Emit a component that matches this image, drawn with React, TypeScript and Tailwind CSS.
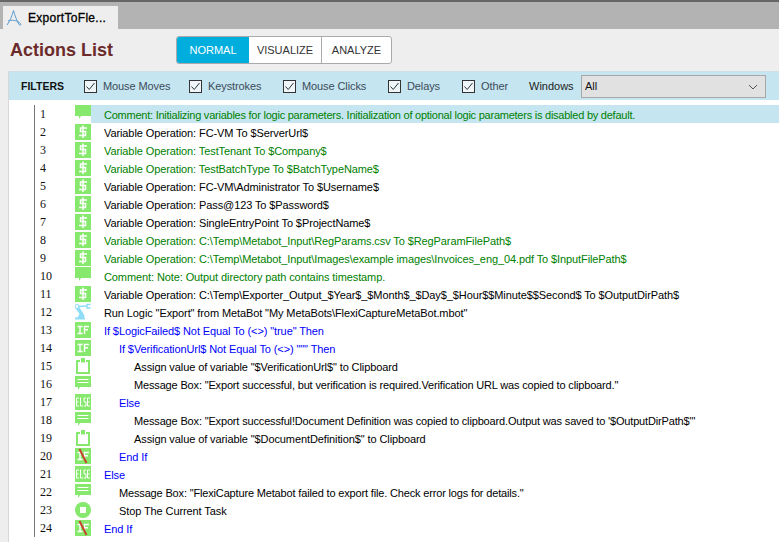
import React from "react";

const G = "#86e86c";

function Comment() {
  return (
    <svg width="16" height="18" viewBox="0 0 16 18" className="block">
      <path d="M0 0H16V11H6L4 14V11H0Z" fill={G} />
    </svg>
  );
}
function Dollar() {
  return (
    <svg width="16" height="18" viewBox="0 0 16 18" className="block">
      <rect width="16" height="16" y="1" fill={G} />
      <path d="M12 5H5.500V8.500H10.500V12.500H4M8 2.500V15" fill="none" stroke="#fff" strokeWidth="1.500" />
    </svg>
  );
}
function Robot() {
  return (
    <svg width="16" height="18" viewBox="0 0 16 18" className="block">
      <path d="M1 6L4.500 4.500L9.500 12.500L9 15H2L4.500 11Z" fill="#8fdcf7" />
      <rect x="0" y="14.500" width="10" height="2" fill="#8fdcf7" />
      <circle cx="2" cy="3.500" r="2" fill="none" stroke="#8fdcf7" strokeWidth="1.200" />
      <path d="M3.500 3.500L11 3" stroke="#8fdcf7" strokeWidth="1.600" />
      <path d="M15.500 1.500H12V5H15.500" fill="none" stroke="#8fdcf7" strokeWidth="1.500" />
    </svg>
  );
}
function If() {
  return (
    <svg width="16" height="18" viewBox="0 0 16 18" className="block">
      <rect width="16" height="16" y="1" fill={G} />
      <path d="M2.500 5.500H7.500M5 5.500V12.500M2.500 12.500H7.500M9.500 13V5.500H14M9.500 8.800H13" fill="none" stroke="#fff" strokeWidth="1.400" />
    </svg>
  );
}
function Clipboard() {
  return (
    <svg width="16" height="18" viewBox="0 0 16 18" className="block">
      <path d="M5 4H2V16H14V4H11" fill="none" stroke={G} strokeWidth="2" />
      <rect x="6" y="1" width="4" height="4.500" fill={G} />
    </svg>
  );
}
function Message() {
  return (
    <svg width="16" height="18" viewBox="0 0 16 18" className="block">
      <path d="M0 1H16V12H5L3 15V12H0Z" fill={G} />
      <path d="M2.500 4.500H13.500M2.500 7.500H13.500" stroke="#fff" strokeWidth="1.200" />
    </svg>
  );
}
function Else() {
  return (
    <svg width="16" height="18" viewBox="0 0 16 18" className="block">
      <rect width="16" height="16" y="1" fill={G} />
      <path d="M4 5H1.500V13H4M1.500 9H3.500M5.500 4.500V13H8M11 5H9V9H11V13H8.800M15 5H12.500V13H15M12.500 9H14.500" fill="none" stroke="#fff" strokeWidth="1" />
    </svg>
  );
}
function EndIf() {
  return (
    <svg width="16" height="18" viewBox="0 0 16 18" className="block">
      <rect width="16" height="16" y="1" fill={G} />
      <path d="M2.500 5.500H7.500M5 5.500V12.500M2.500 12.500H7.500M9.500 13V5.500H14M9.500 8.800H13" fill="none" stroke="#fff" strokeWidth="1.400" />
      <path d="M4.500 2L11.500 16" stroke="#c8402c" strokeWidth="2" />
    </svg>
  );
}
function Stop() {
  return (
    <svg width="16" height="18" viewBox="0 0 16 18" className="block">
      <circle cx="8" cy="9" r="8" fill={G} />
      <rect x="5" y="6" width="6" height="6" fill="#fff" />
    </svg>
  );
}

const icons = { c: Comment, d: Dollar, r: Robot, i: If, p: Clipboard, m: Message, e: Else, x: EndIf, s: Stop };
type Kind = keyof typeof icons;
const green = "text-[#008000]";
const blue = "text-[#0000ff]";
const black = "text-[#000000]";
const base = "tracking-[-0.1px]";
const tight = "tracking-[-0.24px]";
const mid = "tracking-[-0.16px]";

const rows: [Kind, string, string, string][] = [
  ["c", green, tight, "Comment: Initializing variables for logic parameters. Initialization of optional logic parameters is disabled by default."],
  ["d", black, base, "Variable Operation: FC-VM To $ServerUrl$"],
  ["d", green, base, "Variable Operation: TestTenant To $Company$"],
  ["d", green, base, "Variable Operation: TestBatchType To $BatchTypeName$"],
  ["d", black, base, "Variable Operation: FC-VM\\Administrator To $Username$"],
  ["d", black, base, "Variable Operation: Pass@123 To $Password$"],
  ["d", black, base, "Variable Operation: SingleEntryPoint To $ProjectName$"],
  ["d", green, base, "Variable Operation: C:\\Temp\\Metabot_Input\\RegParams.csv To $RegParamFilePath$"],
  ["d", green, base, "Variable Operation: C:\\Temp\\Metabot_Input\\Images\\example images\\Invoices_eng_04.pdf To $InputFilePath$"],
  ["c", green, base, "Comment: Note: Output directory path contains timestamp."],
  ["d", black, base, "Variable Operation: C:\\Temp\\Exporter_Output_$Year$_$Month$_$Day$_$Hour$$Minute$$Second$ To $OutputDirPath$"],
  ["r", black, base, "Run Logic \"Export\" from MetaBot \"My MetaBots\\FlexiCaptureMetaBot.mbot\""],
  ["i", blue, base, "If $LogicFailed$ Not Equal To (<>) \"true\" Then"],
  ["i", blue, `pl-[15px] ${base}`, "If $VerificationUrl$ Not Equal To (<>) \"\"\" Then"],
  ["p", black, `pl-[30px] ${base}`, "Assign value of variable \"$VerificationUrl$\" to Clipboard"],
  ["m", black, `pl-[30px] ${mid}`, "Message Box: \"Export successful, but verification is required.Verification URL was copied to clipboard.\""],
  ["e", blue, `pl-[15px] ${base}`, "Else"],
  ["m", black, `pl-[30px] ${mid}`, "Message Box: \"Export successful!Document Definition was copied to clipboard.Output was saved to '$OutputDirPath$'\""],
  ["p", black, `pl-[30px] ${base}`, "Assign value of variable \"$DocumentDefinition$\" to Clipboard"],
  ["x", blue, `pl-[15px] ${base}`, "End If"],
  ["e", blue, base, "Else"],
  ["m", black, `pl-[15px] ${mid}`, "Message Box: \"FlexiCapture Metabot failed to export file. Check error logs for details.\""],
  ["s", black, `pl-[15px] ${base}`, "Stop The Current Task"],
  ["x", blue, base, "End If"],
];

function Check({ label, w }: { label: string; w: string }) {
  return (
    <div className={`flex items-center ${w}`}>
      <div className="flex h-[13px] w-[13px] items-center justify-center border border-[#333] bg-[#eef6f9]">
        <svg width="11" height="11" viewBox="0 0 11 11">
          <path d="M1.500 5.500L4.200 8.500L9.500 2" fill="none" stroke="#333" strokeWidth="1" />
        </svg>
      </div>
      <span className="ml-[6px] pt-[1px] text-[11px] leading-none tracking-[-0.1px] text-[#3c4a5a]">{label}</span>
    </div>
  );
}

export default function App() {
  return (
    <div className="flex h-[542px] w-[779px] flex-col overflow-hidden bg-[#eeeeee] font-['Liberation_Sans',Arial,sans-serif]">
      <div className="h-[2px] bg-[#666666]" />
      <div className="flex h-[27px] items-end bg-[#b3b3b3] pl-[3px]">
        <div className="flex h-[23px] w-[115px] items-center bg-[#eeeeee] pl-[3px]">
          <svg width="16" height="18" viewBox="0 0 16 18" className="block shrink-0">
            <path d="M1 16C4 12 6 7 7.500 1.500C9 7 11 12 13 15.500C13.800 17 15.500 16 14.500 14.500C11 11 5 10.500 2 12" fill="none" stroke="#5b9bd0" strokeWidth="1" />
          </svg>
          <span className="ml-[6px] text-[12px] leading-none tracking-[0.3px] text-black [-webkit-text-stroke:0.3px_#000]">ExportToFle...</span>
        </div>
      </div>
      <div className="flex h-[42px] items-center pl-[10px]">
        <h1 className="w-[166px] text-[18px] font-bold leading-none text-[#6b2b2b]">Actions List</h1>
        <div className="flex h-[28px] w-[216px] overflow-hidden rounded-[3px] border border-[#aaaaaa] bg-white text-[11px] text-[#333]">
          <div className="flex w-[72px] items-center justify-center bg-[#00aede] text-white">NORMAL</div>
          <div className="flex w-[73px] items-center justify-center border-r border-[#aaaaaa]">VISUALIZE</div>
          <div className="flex flex-1 items-center justify-center">ANALYZE</div>
        </div>
      </div>
      <div className="ml-[8px] flex min-h-0 flex-1 flex-col border-l border-[#d8d8d8] bg-white">
        <div className="flex h-[29px] shrink-0 items-center border-t border-[#d0dfe4] bg-[#c5e6f0] pl-[12px]">
          <span className="w-[63px] pt-[1px] text-[10.5px] font-bold leading-none text-[#111]">FILTERS</span>
          <Check label="Mouse Moves" w="w-[105px]" />
          <Check label="Keystrokes" w="w-[94px]" />
          <Check label="Mouse Clicks" w="w-[105px]" />
          <Check label="Delays" w="w-[74px]" />
          <Check label="Other" w="w-[67px]" />
          <span className="w-[52px] pt-[1px] text-[11px] leading-none text-[#222]">Windows</span>
          <div className="flex h-[23px] w-[185px] items-center justify-between border border-[#a8a8a8] bg-[#e1e1e1] pl-[3px] pr-[7px] pt-[1px] text-[11px] text-[#111]">
            All
            <svg width="10" height="6" viewBox="0 0 10 6">
              <path d="M1 1L5 5L9 1" fill="none" stroke="#555" strokeWidth="1" />
            </svg>
          </div>
        </div>
        <div className="ml-[25px] mt-[5px] border-l border-[#777777]">
          {rows.map(([k, color, indent, text], i) => {
            const Icon = icons[k];
            return (
              <div key={i} className="flex h-[18px] items-center">
                <span className="w-[40px] pl-[5px] font-['Liberation_Serif',serif] text-[12px] leading-none text-[#111]">{i + 1}</span>
                <Icon />
                <div className={`flex h-[18px] flex-1 items-center pl-[13px] pt-[2px] text-[11px] leading-none whitespace-pre ${color} ${i === 0 ? "bg-[#c5e6f0]" : ""}`}>
                  <span className={indent}>{text}</span>
                </div>
              </div>
            );
          })}
        </div>
      </div>
    </div>
  );
}
